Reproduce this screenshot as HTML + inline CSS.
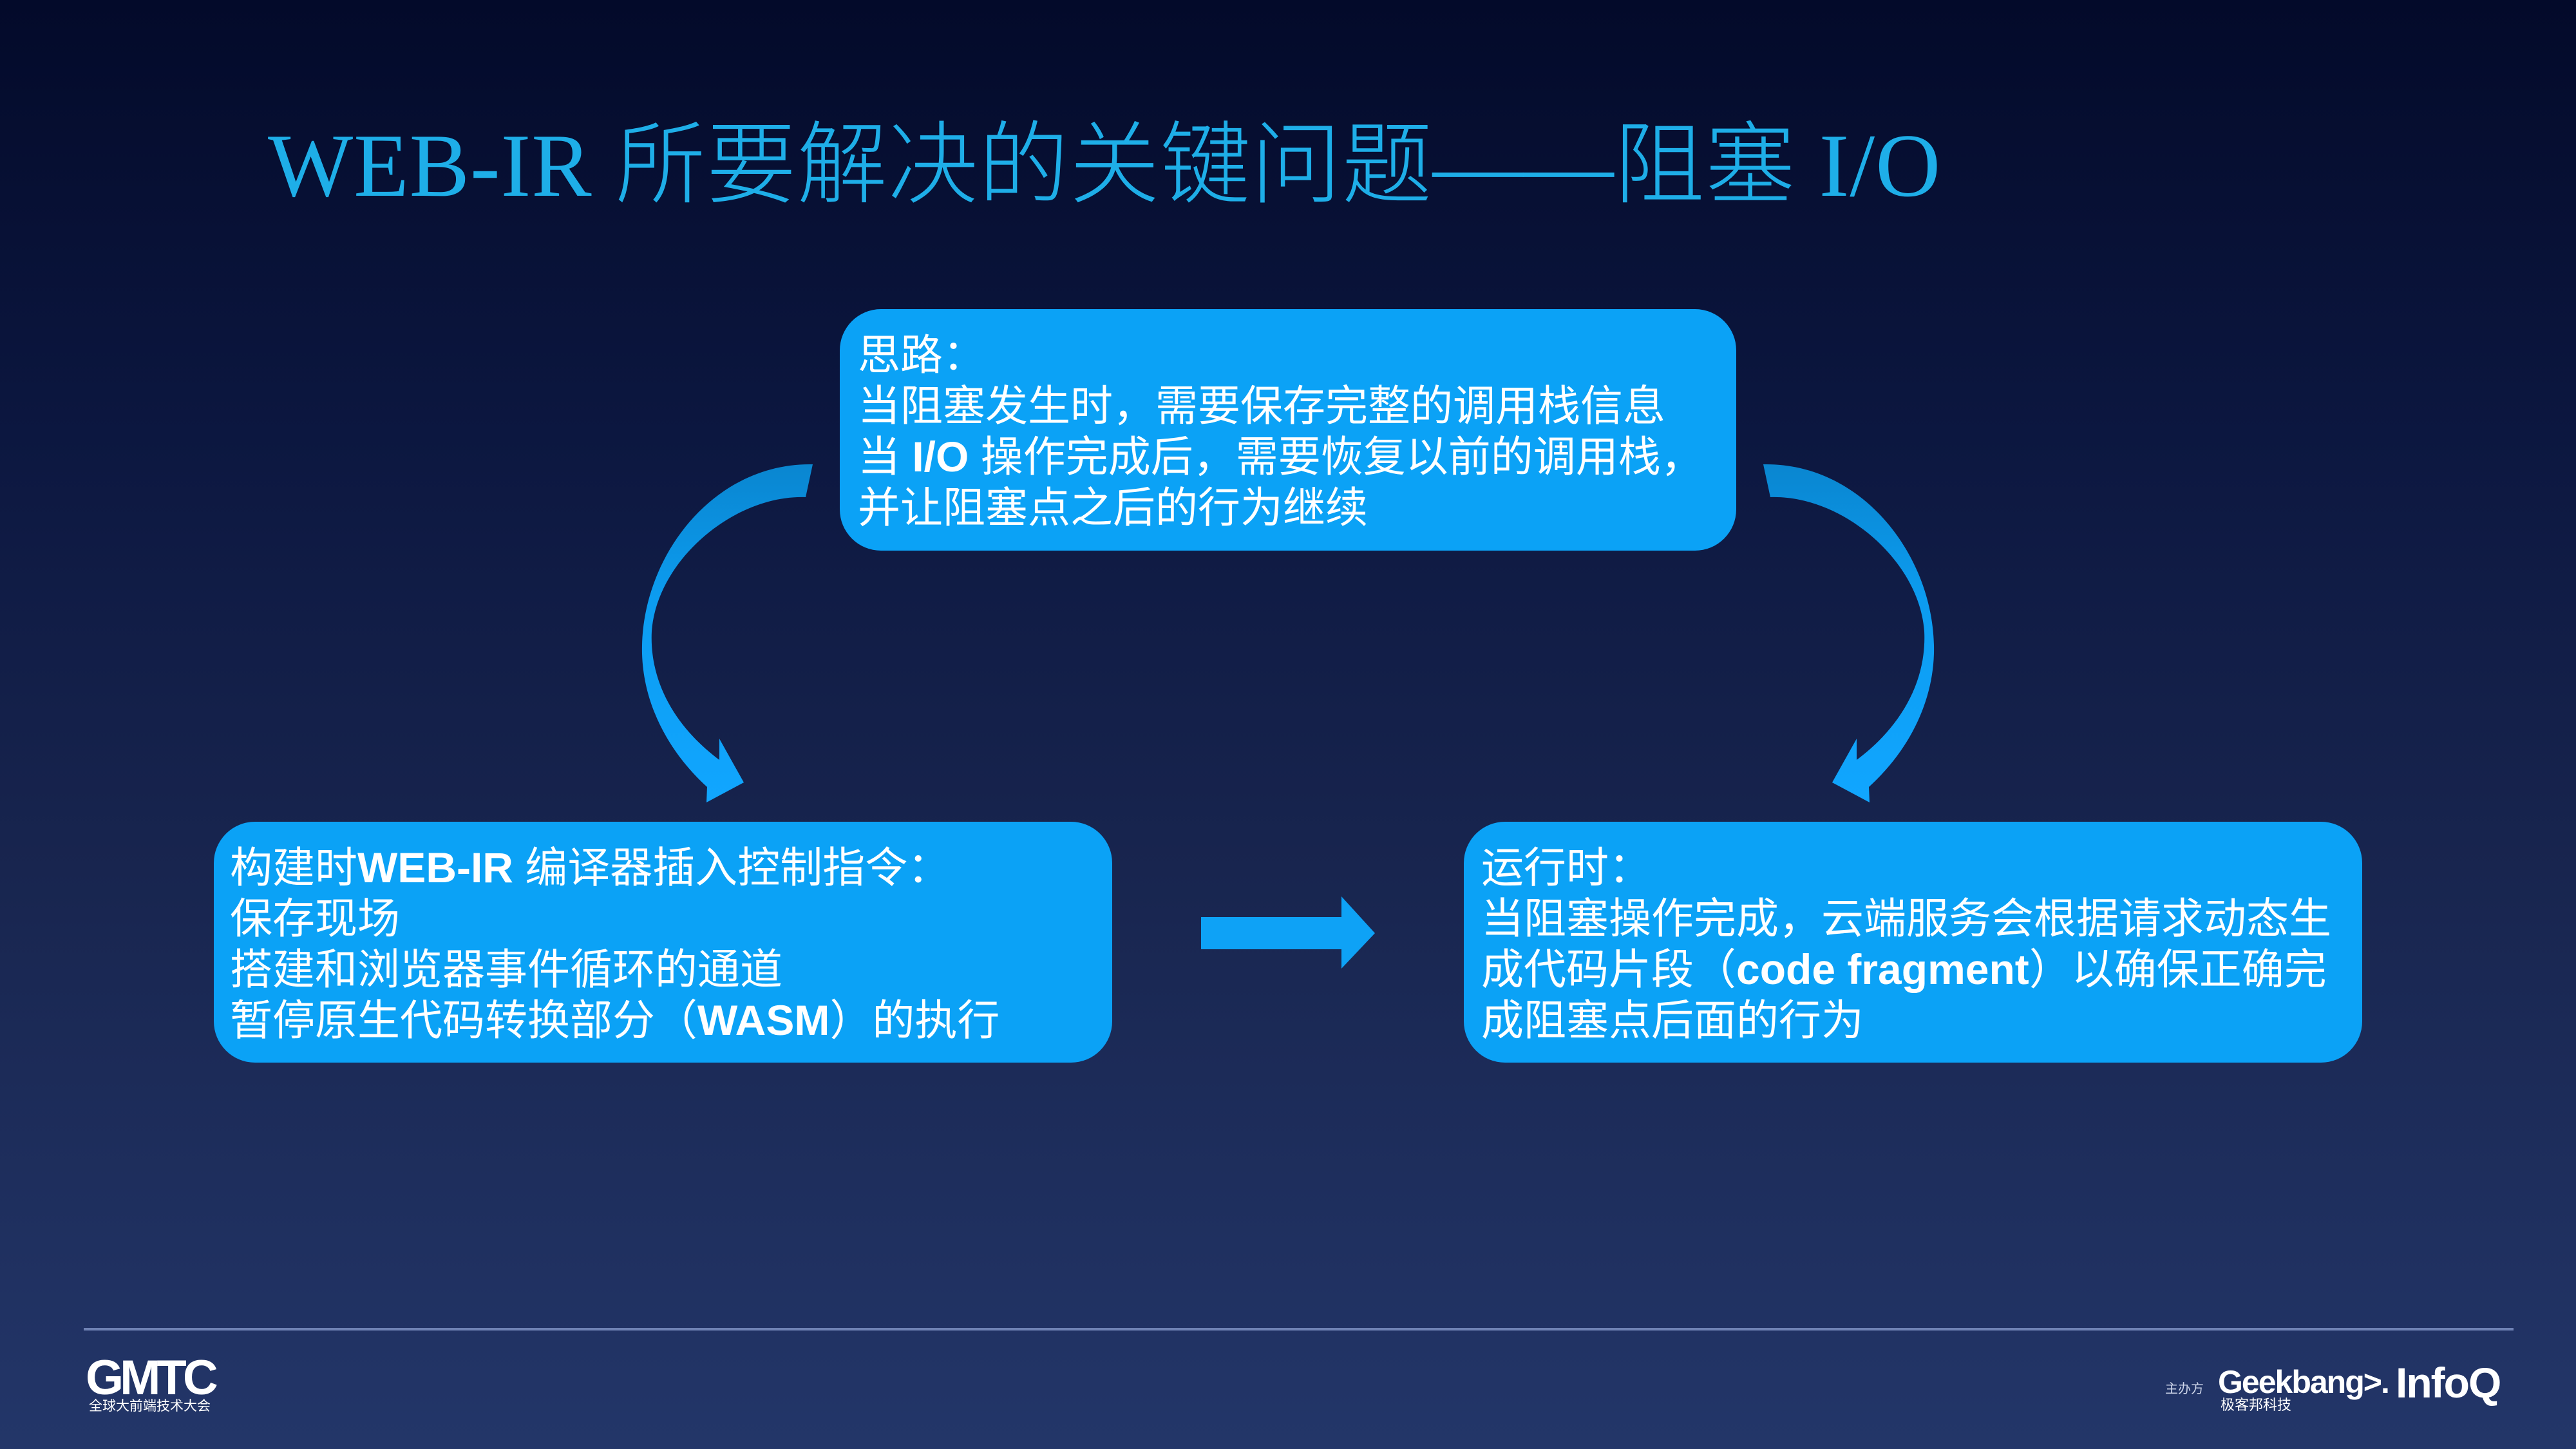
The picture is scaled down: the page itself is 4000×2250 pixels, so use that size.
<!DOCTYPE html>
<html><head><meta charset="utf-8"><style>
html,body{margin:0;padding:0}
body{width:4000px;height:2250px;overflow:hidden;position:relative;
background:linear-gradient(180deg,#030a2a 0%,#0c1740 30%,#18254f 60%,#233669 100%);
font-family:"Liberation Sans","Noto Sans CJK SC",sans-serif;color:#fff}
.title{position:absolute;left:416px;top:178px;font-size:140px;line-height:160px;color:#1eaee8;white-space:nowrap;
font-family:"Liberation Serif","Noto Sans CJK SC",serif;font-weight:300;letter-spacing:1px}
.box{position:absolute;background:#0ba2f6;border-radius:64px;}
.box .t{position:absolute;font-size:66px;line-height:79px;white-space:nowrap}
b{font-family:"Liberation Sans",sans-serif;font-weight:bold}
.line{position:absolute;left:130px;top:2062px;width:3773px;height:4px;background:#6f82b4}
</style></head><body>
<div class="title">WEB-IR 所要解决的关键问题——阻塞 I/O</div>

<div class="box" style="left:1304px;top:480px;width:1392px;height:375px">
<div class="t" style="left:28px;top:32px">思路：<br>当阻塞发生时，需要保存完整的调用栈信息<br>当 <b>I/O</b> 操作完成后，需要恢复以前的调用栈，<br>并让阻塞点之后的行为继续</div></div>

<div class="box" style="left:332px;top:1276px;width:1395px;height:374px">
<div class="t" style="left:25px;top:32px">构建时<b>WEB-IR</b> 编译器插入控制指令：<br>保存现场<br>搭建和浏览器事件循环的通道<br>暂停原生代码转换部分（<b>WASM</b>）的执行</div></div>

<div class="box" style="left:2273px;top:1276px;width:1395px;height:374px">
<div class="t" style="left:27px;top:32px">运行时：<br>当阻塞操作完成，云端服务会根据请求动态生<br>成代码片段（<b>code fragment</b>）以确保正确完<br>成阻塞点后面的行为</div></div>

<svg width="4000" height="2250" style="position:absolute;left:0;top:0">
<defs><linearGradient id="g" x1="0" y1="0" x2="0" y2="1"><stop offset="0" stop-color="#0a86d0"/><stop offset="0.4" stop-color="#0c9cf0"/><stop offset="1" stop-color="#11a6ff"/></linearGradient></defs>
<g fill="url(#g)">
<path d="M1262,721 L1251,772 C1140,768 1020,870 1012,980 C1008,1060 1050,1130 1117,1180 L1117,1147 L1155,1215 L1097,1246 L1098,1222 C1030,1160 995,1080 997,1002 C1000,860 1110,718 1262,721 Z"/>
</g>
<g transform="translate(4000,0) scale(-1,1)" fill="url(#g)">
<path d="M1262,721 L1251,772 C1140,768 1020,870 1012,980 C1008,1060 1050,1130 1117,1180 L1117,1147 L1155,1215 L1097,1246 L1098,1222 C1030,1160 995,1080 997,1002 C1000,860 1110,718 1262,721 Z"/>
</g>
<path d="M1865,1424 L2083,1424 L2083,1392 L2135,1449 L2083,1504 L2083,1474 L1865,1474 Z" fill="#0ea2f6"/>
</svg>

<div class="line"></div>
<div style="position:absolute;left:133px;top:2100px;font-size:76px;font-weight:bold;letter-spacing:-6px;line-height:80px;font-family:'Liberation Sans',sans-serif">GMTC</div>
<div style="position:absolute;left:138px;top:2172px;font-size:21px;line-height:24px;white-space:nowrap">全球大前端技术大会</div>
<div style="position:absolute;left:3362px;top:2140px;font-size:20px;color:#cfd6ea">主办方</div>
<div style="position:absolute;left:3444px;top:2118px;font-size:50px;line-height:56px;font-weight:bold;letter-spacing:-2px;white-space:nowrap">Geekbang&gt;.</div>
<div style="position:absolute;left:3448px;top:2170px;font-size:22px;line-height:24px;white-space:nowrap">极客邦科技</div>
<div style="position:absolute;left:3720px;top:2112px;font-size:66px;line-height:70px;font-weight:bold;letter-spacing:-2px">InfoQ</div>
</body></html>
